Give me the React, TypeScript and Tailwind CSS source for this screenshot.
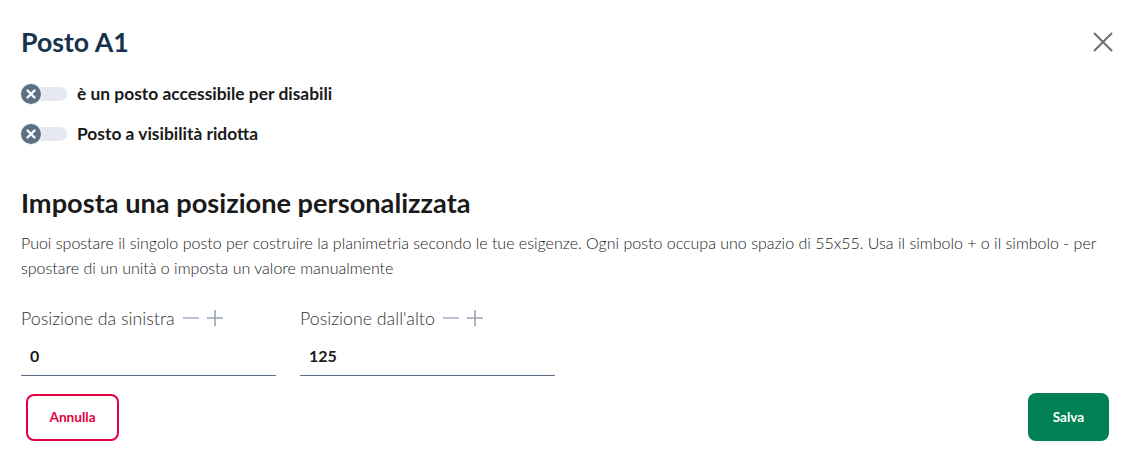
import { useState } from 'react';

const font = { fontFamily: 'Lato, "Noto Sans", sans-serif' };

const Toggle = ({ label, checked, onChange }: { label: string; checked: boolean; onChange: () => void }) => (
  <label className="flex items-center gap-[10px] h-[24px] cursor-pointer select-none">
    <button
      type="button"
      onClick={onChange}
      className="relative w-[46px] h-[20px] flex items-center shrink-0"
    >
      <span className="absolute left-[1px] right-0 h-[14px] rounded-full bg-[#e6e9f2]" />
      <span
        className={`relative z-10 w-[20px] h-[20px] rounded-full flex items-center justify-center ring-1 ring-[#eef0f4] ${checked ? 'translate-x-[26px] bg-[#008055]' : 'bg-[#5d7083]'}`}
      >
        <svg width="12" height="12" viewBox="0 0 12 12" fill="none">
          <path d="M2.5 2.5L9.5 9.5M9.5 2.5L2.5 9.5" stroke="white" strokeWidth="2.4" strokeLinecap="round" />
        </svg>
      </span>
    </button>
    <span className="text-[17.4px] leading-[24px] font-bold text-[#1a1a1a]">{label}</span>
  </label>
);

const PositionField = ({ label, value, setValue }: { label: string; value: number; setValue: (v: number) => void }) => (
  <div className="w-[255px]">
    <div className="flex items-center h-[24px]">
      <span className="text-[17.8px] font-light text-[#333]">{label}</span>
      <button type="button" onClick={() => setValue(value - 1)} className="ml-[8px] w-[16px] h-[16px] flex items-center justify-center">
        <svg width="16" height="16" viewBox="0 0 16 16"><path d="M0 8H16" stroke="#a9b3d0" strokeWidth="1.6" /></svg>
      </button>
      <button type="button" onClick={() => setValue(value + 1)} className="ml-[8px] w-[16px] h-[16px] flex items-center justify-center">
        <svg width="16" height="16" viewBox="0 0 16 16"><path d="M0 8H16M8 0V16" stroke="#9aa3ae" strokeWidth="1.6" /></svg>
      </button>
    </div>
    <input
      value={value}
      onChange={e => setValue(Number(e.target.value) || 0)}
      className="mt-[12px] w-full h-[34px] px-[9px] pb-[6px] text-[16px] font-bold text-[#1a1a1a] border-b border-b-[#5d7083] outline-none bg-transparent"
      style={font}
    />
  </div>
);

export default function App() {
  const [accessible, setAccessible] = useState(false);
  const [reduced, setReduced] = useState(false);
  const [left, setLeft] = useState(0);
  const [top, setTop] = useState(125);

  return (
    <div className="w-[1133px] h-[453px] bg-white px-[21px] pt-[26px] text-[#1a1a1a]" style={font}>
      <div className="flex items-start justify-between">
        <h2 className="text-[26.7px] leading-[32px] font-bold text-[#17324d]">Posto A1</h2>
        <button type="button" className="mt-[5px] mr-[-2px] w-[22px] h-[22px] flex items-center justify-center">
          <svg width="20" height="20" viewBox="0 0 20 20" fill="none">
            <path d="M1 1L19 19M19 1L1 19" stroke="#6e6e6e" strokeWidth="2" />
          </svg>
        </button>
      </div>

      <div className="mt-[24px] flex flex-col gap-[16px]">
        <Toggle label="è un posto accessibile per disabili" checked={accessible} onChange={() => setAccessible(!accessible)} />
        <Toggle label="Posto a visibilità ridotta" checked={reduced} onChange={() => setReduced(!reduced)} />
      </div>

      <h3 className="mt-[39px] text-[27.2px] leading-[36px] font-bold text-[#1a1a1a]">Imposta una posizione personalizzata</h3>
      <p className="mt-[9px] text-[16px] leading-[25px] font-light text-[#1a1a1a]">
        Puoi spostare il singolo posto per costruire la planimetria secondo le tue esigenze. Ogni posto occupa uno spazio di 55x55. Usa il simbolo + o il simbolo - per spostare di un unità o imposta un valore manualmente
      </p>

      <div className="mt-[26px] flex gap-[24px]">
        <PositionField label="Posizione da sinistra" value={left} setValue={setLeft} />
        <PositionField label="Posizione dall'alto" value={top} setValue={setTop} />
      </div>

      <div className="mt-[17px] flex items-center justify-between pl-[5px] pr-[3px]">
        <button type="button" className="w-[93px] h-[47px] rounded-[8px] border-2 border-[#e4003f] text-[#e4003f] text-[13.6px] font-bold">
          Annulla
        </button>
        <button type="button" className="w-[81px] h-[48px] rounded-[8px] bg-[#008055] text-white text-[13.6px] font-bold">
          Salva
        </button>
      </div>
    </div>
  );
}
